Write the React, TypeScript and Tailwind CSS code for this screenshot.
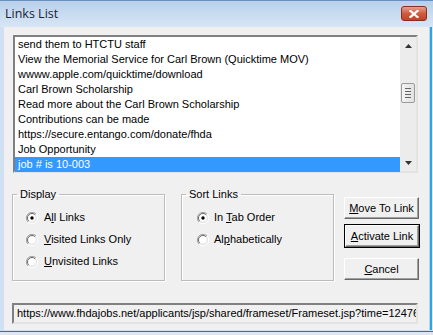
import React from "react";

const items = [
  "send them to HTCTU staff",
  "View the Memorial Service for Carl Brown (Quicktime MOV)",
  "wwww.apple.com/quicktime/download",
  "Carl Brown Scholarship",
  "Read more about the Carl Brown Scholarship",
  "Contributions can be made",
  "https://secure.entango.com/donate/fhda",
  "Job Opportunity",
  "job # is 10-003",
];

function Radio({ checked }: { checked?: boolean }) {
  return (
    <svg width="12" height="12" viewBox="0 0 12 12" className="shrink-0">
      <path d="M10 2 A5.5 5.5 0 0 0 2 10" fill="none" stroke="#a0a0a0" strokeWidth="1" />
      <path d="M9.2 2.8 A4.5 4.5 0 0 0 2.8 9.2" fill="none" stroke="#696969" strokeWidth="1" />
      <path d="M2 10 A5.5 5.5 0 0 0 10 2" fill="none" stroke="#ffffff" strokeWidth="1" />
      <path d="M2.8 9.2 A4.5 4.5 0 0 0 9.2 2.8" fill="none" stroke="#e3e3e3" strokeWidth="1" />
      <circle cx="6" cy="6" r="3.6" fill="#ffffff" />
      {checked && <circle cx="6" cy="6" r="1.7" fill="#000000" />}
    </svg>
  );
}

function Mn({ pre, u, post }: { pre?: string; u: string; post: string }) {
  return (
    <span className="leading-[13px]">
      {pre}
      <span className="underline underline-offset-1">{u}</span>
      {post}
    </span>
  );
}

function Button({ children, isDefault }: { children: React.ReactNode; isDefault?: boolean }) {
  return (
    <div
      className={
        isDefault
          ? "h-[24px] w-[76px] border border-black"
          : "h-[22px] w-[75px]"
      }
    >
      <div className="flex h-full w-full items-center justify-center border border-t-white border-l-white border-r-[#696969] border-b-[#696969] bg-[#f0f0f0] shadow-[inset_-1px_-1px_0_#a0a0a0]">
        {children}
      </div>
    </div>
  );
}

function Group({ title, pad, children }: { title: string; pad: string; children: React.ReactNode }) {
  return (
    <fieldset className="h-[93px] w-[153px] border border-[#bcbcbc] shadow-[inset_1px_1px_0_#fff,1px_1px_0_#fff]">
      <legend className="ml-[4px] px-[3px] leading-[13px]">{title}</legend>
      <div className={"mt-[10px] flex flex-col gap-[9px] " + pad}>{children}</div>
    </fieldset>
  );
}

export default function App() {
  return (
    <div
      className="flex h-[335px] w-[433px] flex-col bg-[#cfe0f2] text-[11px] text-black"
      style={{ fontFamily: '"Liberation Sans", Arial, sans-serif' }}
    >
      {/* title bar */}
      <div className="flex h-[27px] items-center justify-between border-t border-[#6a8fbd] bg-gradient-to-b from-[#b8d0ea] via-[#c8dbf0] to-[#d8e6f6] pl-[5px] pr-[6px]">
        <span className="text-[12.5px] text-[#1a2436]" style={{ fontFamily: '"Open Sans", "Noto Sans", sans-serif' }}>
          Links List
        </span>
        <div className="mt-[-1px] flex h-[15px] w-[26px] items-center justify-center rounded-[3px] border border-[#8b2e22] bg-gradient-to-b from-[#e5a08f] via-[#cf5a3e] to-[#c3432a]">
          <svg width="10" height="8" viewBox="0 0 10 8">
            <path d="M1.5 1 L8.5 7 M8.5 1 L1.5 7" stroke="#ffffff" strokeWidth="2.2" strokeLinecap="square" />
          </svg>
        </div>
      </div>

      <div className="flex flex-1">
        <div className="w-[4px]" />
        {/* client area */}
        <div className="flex w-[425px] flex-col bg-[#f0f0f0] pl-[8px] pt-[8px]">
          {/* list box */}
          <div className="ml-[1px] flex h-[138px] w-[405px] border-2 border-t-[#808080] border-l-[#808080] border-r-[#e3e3e3] border-b-[#e3e3e3] bg-white">
            <div className="flex flex-1 flex-col">
              {items.map((it, i) => (
                <div
                  key={i}
                  className={
                    i === items.length - 1
                      ? "h-[15px] whitespace-nowrap bg-[#3399ff] pl-[3px] leading-[15px] text-white"
                      : "h-[15px] whitespace-nowrap pl-[3px] leading-[15px]"
                  }
                >
                  {it}
                </div>
              ))}
            </div>
            <div className="flex w-[16px] flex-col items-center bg-[#ececec]">
              <div className="flex h-[17px] w-full items-center justify-center">
                <svg width="7" height="4" viewBox="0 0 7 4">
                  <path d="M0 4 L3.5 0 L7 4 Z" fill="#333" />
                </svg>
              </div>
              <div className="mt-[29px] flex h-[20px] w-[14px] flex-col items-center justify-center gap-[2px] rounded-[2px] border border-[#9a9a9a] bg-gradient-to-r from-[#f4f4f4] to-[#e2e2e2]">
                <div className="h-px w-[6px] bg-[#666]" />
                <div className="h-px w-[6px] bg-[#666]" />
                <div className="h-px w-[6px] bg-[#666]" />
                <div className="h-px w-[6px] bg-[#666]" />
              </div>
              <div className="flex-1" />
              <div className="flex h-[17px] w-full items-center justify-center">
                <svg width="7" height="4" viewBox="0 0 7 4">
                  <path d="M0 0 L3.5 4 L7 0 Z" fill="#333" />
                </svg>
              </div>
            </div>
          </div>

          {/* groups + buttons */}
          <div className="mt-[15px] flex">
            <Group title="Display" pad="pl-[13px]">
              <div className="flex items-center gap-[6px]">
                <Radio checked />
                <Mn pre="A" u="l" post="l Links" />
              </div>
              <div className="flex items-center gap-[6px]">
                <Radio />
                <Mn u="V" post="isited Links Only" />
              </div>
              <div className="flex items-center gap-[6px]">
                <Radio />
                <Mn u="U" post="nvisited Links" />
              </div>
            </Group>
            <div className="ml-[16px]">
              <Group title="Sort Links" pad="pl-[15px]">
                <div className="flex items-center gap-[5px]">
                  <Radio checked />
                  <Mn pre="In " u="T" post="ab Order" />
                </div>
                <div className="flex items-center gap-[5px]">
                  <Radio />
                  <Mn pre="Al" u="p" post="habetically" />
                </div>
              </Group>
            </div>
            <div className="ml-[10px] mt-[9px] flex flex-col gap-[5px]">
              <Button>
                <Mn u="M" post="ove To Link" />
              </Button>
              <Button isDefault>
                <Mn u="A" post="ctivate Link" />
              </Button>
              <div className="mt-[5px]">
                <Button>
                  <Mn u="C" post="ancel" />
                </Button>
              </div>
            </div>
          </div>

          {/* url field */}
          <div className="mt-[22px] flex h-[21px] w-[406px] items-center overflow-hidden border-2 border-t-[#808080] border-l-[#808080] border-r-[#e3e3e3] border-b-[#e3e3e3] bg-[#f0f0f0] pl-[3px]">
            <span className="whitespace-nowrap">
              https://www.fhdajobs.net/applicants/jsp/shared/frameset/Frameset.jsp?time=12476
            </span>
          </div>
        </div>
        <div className="w-[1px] bg-[#b9d3ec]" />
        <div className="w-[2px] bg-[#2aa6e6]" />
        <div className="w-[1px] bg-[#dbe7f5]" />
      </div>
      <div className="h-[1px] bg-[#cfe0f2]" />
      <div className="h-[1px] bg-[#3a6ea5]" />
      <div className="h-[3px] bg-[#dbe7f5]" />
    </div>
  );
}
